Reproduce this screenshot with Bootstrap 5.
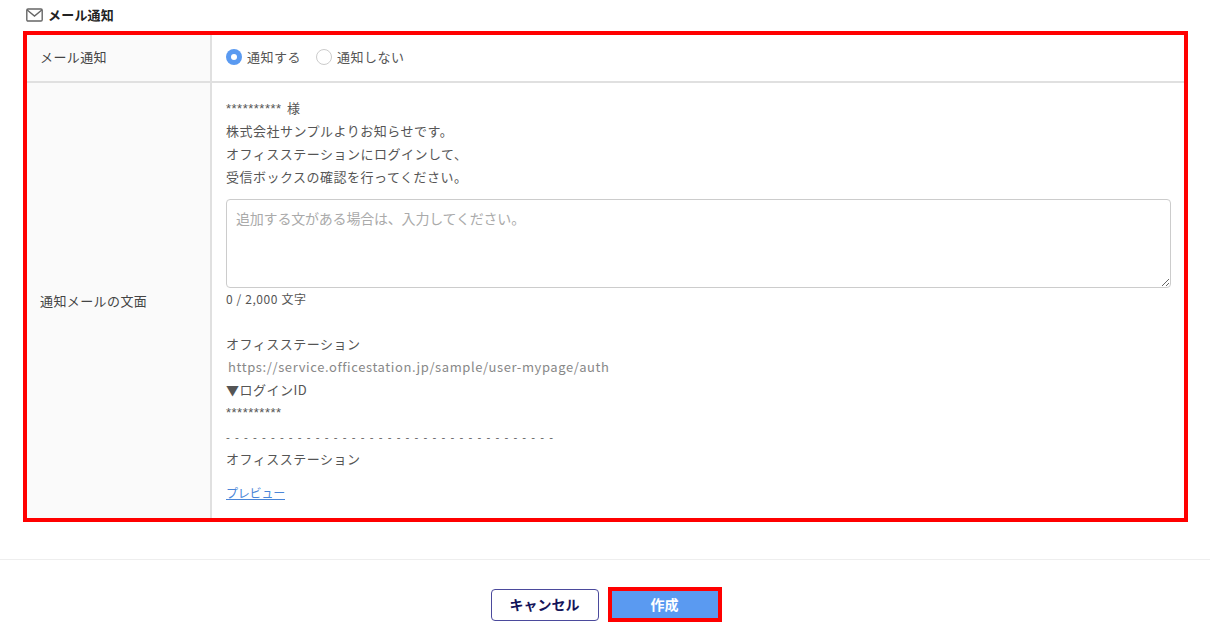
<!DOCTYPE html>
<html lang="ja">
<head>
<meta charset="utf-8">
<title>メール通知</title>
<link href="https://cdn.jsdelivr.net/npm/bootstrap@5.3.0/dist/css/bootstrap.min.css" rel="stylesheet">
<style>
html,body{height:630px;overflow:hidden;background:#fff}
body{font-family:"Noto Sans CJK JP","Noto Sans",sans-serif;font-size:13px;letter-spacing:.5px;color:#555}
.mail-head{height:30px;padding-left:26px;margin-bottom:1px;font-size:13px;font-weight:700;color:#222;letter-spacing:.2px}
.mail-head svg{margin-right:5px}
.frame{margin:0 22px 0 23px;border:4px solid #f00;height:491px;display:flex;flex-direction:column}
.line-a{height:48px;border-bottom:2px solid #e0e0e0;display:flex}
.line-a>.lab,.line-a>.val{padding-bottom:2px}
.line-b{flex:1;display:flex;min-height:0}
.lab{width:185px;flex:none;background:#fafafa;border-right:2px solid #e0e0e0;padding-left:13px;display:flex;align-items:center;color:#444;letter-spacing:.4px}
.val{flex:1;min-width:0;padding-left:14px;padding-right:13px}
.rad{width:16px;height:16px;border-radius:50%;border:1px solid #ccc;background:#fff;display:inline-block;margin-right:5px;flex:none}
.rad.on{background:#5a9af1;border:0;position:relative}
.rad.on::after{content:"";position:absolute;left:5px;top:5px;width:6px;height:6px;border-radius:50%;background:#fff}
.opt{margin-right:15px}
.tl{height:23px;line-height:23px;white-space:nowrap}
.tl.first{margin-top:13px}
.stars{font-family:"Liberation Sans",sans-serif;font-size:13px;letter-spacing:.5px}
.first .stars{margin-right:2px}
.ta{display:block;width:100%;height:89px;margin-top:11px;border:1px solid #ccc;border-radius:4px;padding:8px 9px;font:inherit;font-size:14px;letter-spacing:-.2px;color:#444;outline:0}
.ta::placeholder{color:#aaa;opacity:1}
.cnt{font-size:12px;line-height:22px;letter-spacing:.6px;margin-bottom:22px}
.url{padding-left:2px;color:#888;letter-spacing:.6px}
.dash{font-size:11px;letter-spacing:1.35px;position:relative;top:2px}
.pv{font-size:12px;color:#4a86d8;letter-spacing:-.2px}
.pv-line{margin-top:11px}
.rule{height:1px;background:#eee;margin-top:37px}
.foot{margin-top:27px;gap:9px;padding-left:2px}
.b-cancel{width:108px;height:32px;border:1px solid #4b4a9c;border-radius:4px;background:#fff;color:#14145a;font-weight:700;font-size:14px;padding:0;letter-spacing:0}
.b-make-w{border:4px solid #f00;padding:0;width:114px;height:35px;background:#5a9af1;color:#fff;font-size:14px;font-weight:700;border-radius:0;letter-spacing:0}
</style>
</head>
<body>
<div class="mail-head d-flex align-items-center">
<svg width="17" height="14" viewBox="0 0 17 14" fill="none" stroke="#666" stroke-width="1.4"><rect x=".8" y="1" width="15.4" height="12" rx="1.2"/><path d="M1.2 2l7.3 6 7.3-6"/></svg>
<span>メール通知</span>
</div>
<div class="frame">
<div class="line-a">
<div class="lab">メール通知</div>
<div class="val d-flex align-items-center">
<span class="rad on"></span><span class="opt">通知する</span>
<span class="rad"></span><span>通知しない</span>
</div>
</div>
<div class="line-b">
<div class="lab">通知メールの文面</div>
<div class="val">
<div class="tl first"><span class="stars">**********</span> 様</div>
<div class="tl">株式会社サンプルよりお知らせです。</div>
<div class="tl">オフィスステーションにログインして、</div>
<div class="tl">受信ボックスの確認を行ってください。</div>
<textarea class="ta" placeholder="追加する文がある場合は、入力してください。"></textarea>
<div class="cnt">0 / 2,000 文字</div>
<div class="tl">オフィスステーション</div>
<div class="tl url">https://service.officestation.jp/sample/user-mypage/auth</div>
<div class="tl">▼ログインID</div>
<div class="tl stars">**********</div>
<div class="tl dash">- - - - - - - - - - - - - - - - - - - - - - - - - - - - - - - - - - - - -</div>
<div class="tl">オフィスステーション</div>
<div class="tl pv-line"><a href="#" class="pv">プレビュー</a></div>
</div>
</div>
</div>
<div class="rule"></div>
<div class="foot d-flex justify-content-center align-items-center">
<button type="button" class="btn b-cancel">キャンセル</button>
<button type="button" class="btn b-make-w">作成</button>
</div>
</body>
</html>
